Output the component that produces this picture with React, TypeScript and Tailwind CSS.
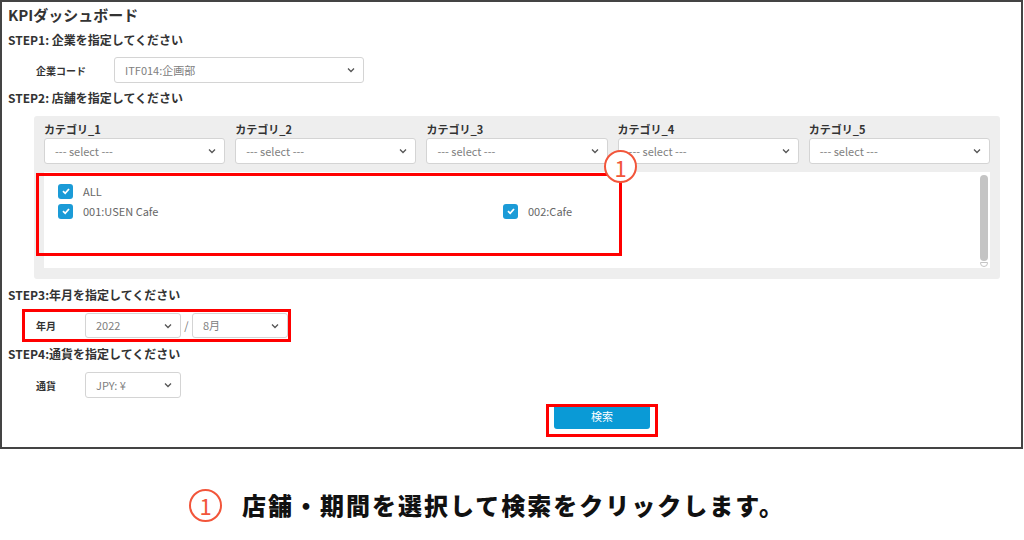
import React from 'react';

const jp = "font-['Noto_Sans_CJK_JP','Noto_Sans',sans-serif]";

function Chevron() {
  return (
    <svg width="10" height="10" viewBox="0 0 10 10" className="shrink-0">
      <path d="M2 3.5 L5 6.5 L8 3.5" fill="none" stroke="#555" strokeWidth="1.3" />
    </svg>
  );
}

function Select({ text, className }: { text: string; className: string }) {
  return (
    <div className={`flex items-center justify-between bg-white border border-[#d4d4d4] rounded-[3px] pl-[10px] pr-[7px] text-[11px] text-[#808080] ${className}`}>
      <span>{text}</span>
      <Chevron />
    </div>
  );
}

function Check({ label }: { label: string }) {
  return (
    <div className="flex items-center gap-[10px] h-[20px]">
      <div className="w-[15px] h-[15px] rounded-[3px] bg-[#1b9bd7] flex items-center justify-center">
        <svg width="10" height="10" viewBox="0 0 10 10">
          <path d="M2 5.2 L4.2 7.3 L8 3" fill="none" stroke="#fff" strokeWidth="1.8" />
        </svg>
      </div>
      <span className="text-[11px] text-[#666]">{label}</span>
    </div>
  );
}

export default function App() {
  const cats = ['カテゴリ_1', 'カテゴリ_2', 'カテゴリ_3', 'カテゴリ_4', 'カテゴリ_5'];

  return (
    <div className={`relative w-[1024px] h-[540px] bg-white ${jp}`}>
      <div className="w-[1023px] h-[449px] border-2 border-[#444] pl-[6px] pt-[3px] text-[#333]">
        <h1 className="text-[15px] font-bold leading-[20px]">KPIダッシュボード</h1>

        <p className="mt-[7px] text-[12px] font-bold leading-[16px]">STEP1: 企業を指定してください</p>
        <div className="mt-[9px] flex items-center">
          <span className="w-[106px] pl-[28px] text-[10px] font-bold">企業コード</span>
          <Select text="ITF014:企画部" className="w-[250px] h-[26px]" />
        </div>

        <p className="mt-[7px] text-[12px] font-bold leading-[16px]">STEP2: 店舗を指定してください</p>
        <div className="mt-[10px] ml-[26px] w-[966px] h-[163px] bg-[#eeeeee] rounded-[3px] px-[10px] pt-[6px]">
          <div className="grid grid-cols-5 gap-[10px]">
            {cats.map((c) => (
              <div key={c}>
                <p className="text-[11px] font-bold leading-[14px] mb-[2px]">{c}</p>
                <Select text="--- select ---" className="h-[26px]" />
              </div>
            ))}
          </div>
          <div className="mt-[8px] h-[96px] bg-white flex">
            <div className="flex-1 pl-[14px] pt-[9px]">
              <Check label="ALL" />
              <div className="flex">
                <div className="w-[445px]">
                  <Check label="001:USEN Cafe" />
                </div>
                <Check label="002:Cafe" />
              </div>
            </div>
            <div className="w-[10px] mr-[1px] pt-[3px] pb-[1px] flex flex-col items-center">
              <div className="w-[8px] flex-1 rounded-[4px] bg-[#c4c4c4]" />
              <div className="w-[8px] h-[5px] mt-[1px] rounded-b-[4px] border border-[#c4c4c4]" />
            </div>
          </div>
        </div>

        <p className="mt-[8px] text-[12px] font-bold leading-[16px]">STEP3:年月を指定してください</p>
        <div className="mt-[10px] flex items-center">
          <span className="w-[77px] pl-[28px] text-[10px] font-bold">年月</span>
          <Select text="2022" className="w-[96px] h-[25px]" />
          <span className="w-[11px] text-center text-[11px] text-[#777]">/</span>
          <Select text="8月" className="w-[96px] h-[25px]" />
        </div>

        <p className="mt-[8px] text-[12px] font-bold leading-[16px]">STEP4:通貨を指定してください</p>
        <div className="mt-[10px] flex items-center">
          <span className="w-[77px] pl-[28px] text-[10px] font-bold">通貨</span>
          <Select text="JPY: ¥" className="w-[96px] h-[26px]" />
        </div>

        <div className="mt-[6px] ml-[546px] w-[96px] h-[25px] bg-[#0a9ad6] rounded-[3px] flex items-center justify-center text-[11px] text-white">
          検索
        </div>
      </div>

      {/* annotations */}
      <div className="absolute left-[36px] top-[173px] w-[586px] h-[83px] border-[3px] border-[#ff0000]" />
      <div className="absolute left-[604px] top-[150px] w-[33px] h-[33px] rounded-full border-2 border-[#f2553a] bg-white flex items-center justify-center text-[22px] leading-none text-[#f2553a]">
        1
      </div>
      <div className="absolute left-[22px] top-[309px] w-[269px] h-[33px] border-[3px] border-[#ff0000]" />
      <div className="absolute left-[546px] top-[404px] w-[112px] h-[33px] border-[3px] border-[#ff0000]" />

      <div className="absolute left-[189px] top-[487px] flex items-center">
        <div className="w-[33px] h-[33px] rounded-full border-2 border-[#f2553a] flex items-center justify-center text-[22px] leading-none text-[#f2553a]">
          1
        </div>
        <span className="ml-[20px] text-[24px] font-black tracking-[2px] text-[#111]">店舗・期間を選択して検索をクリックします。</span>
      </div>
    </div>
  );
}
